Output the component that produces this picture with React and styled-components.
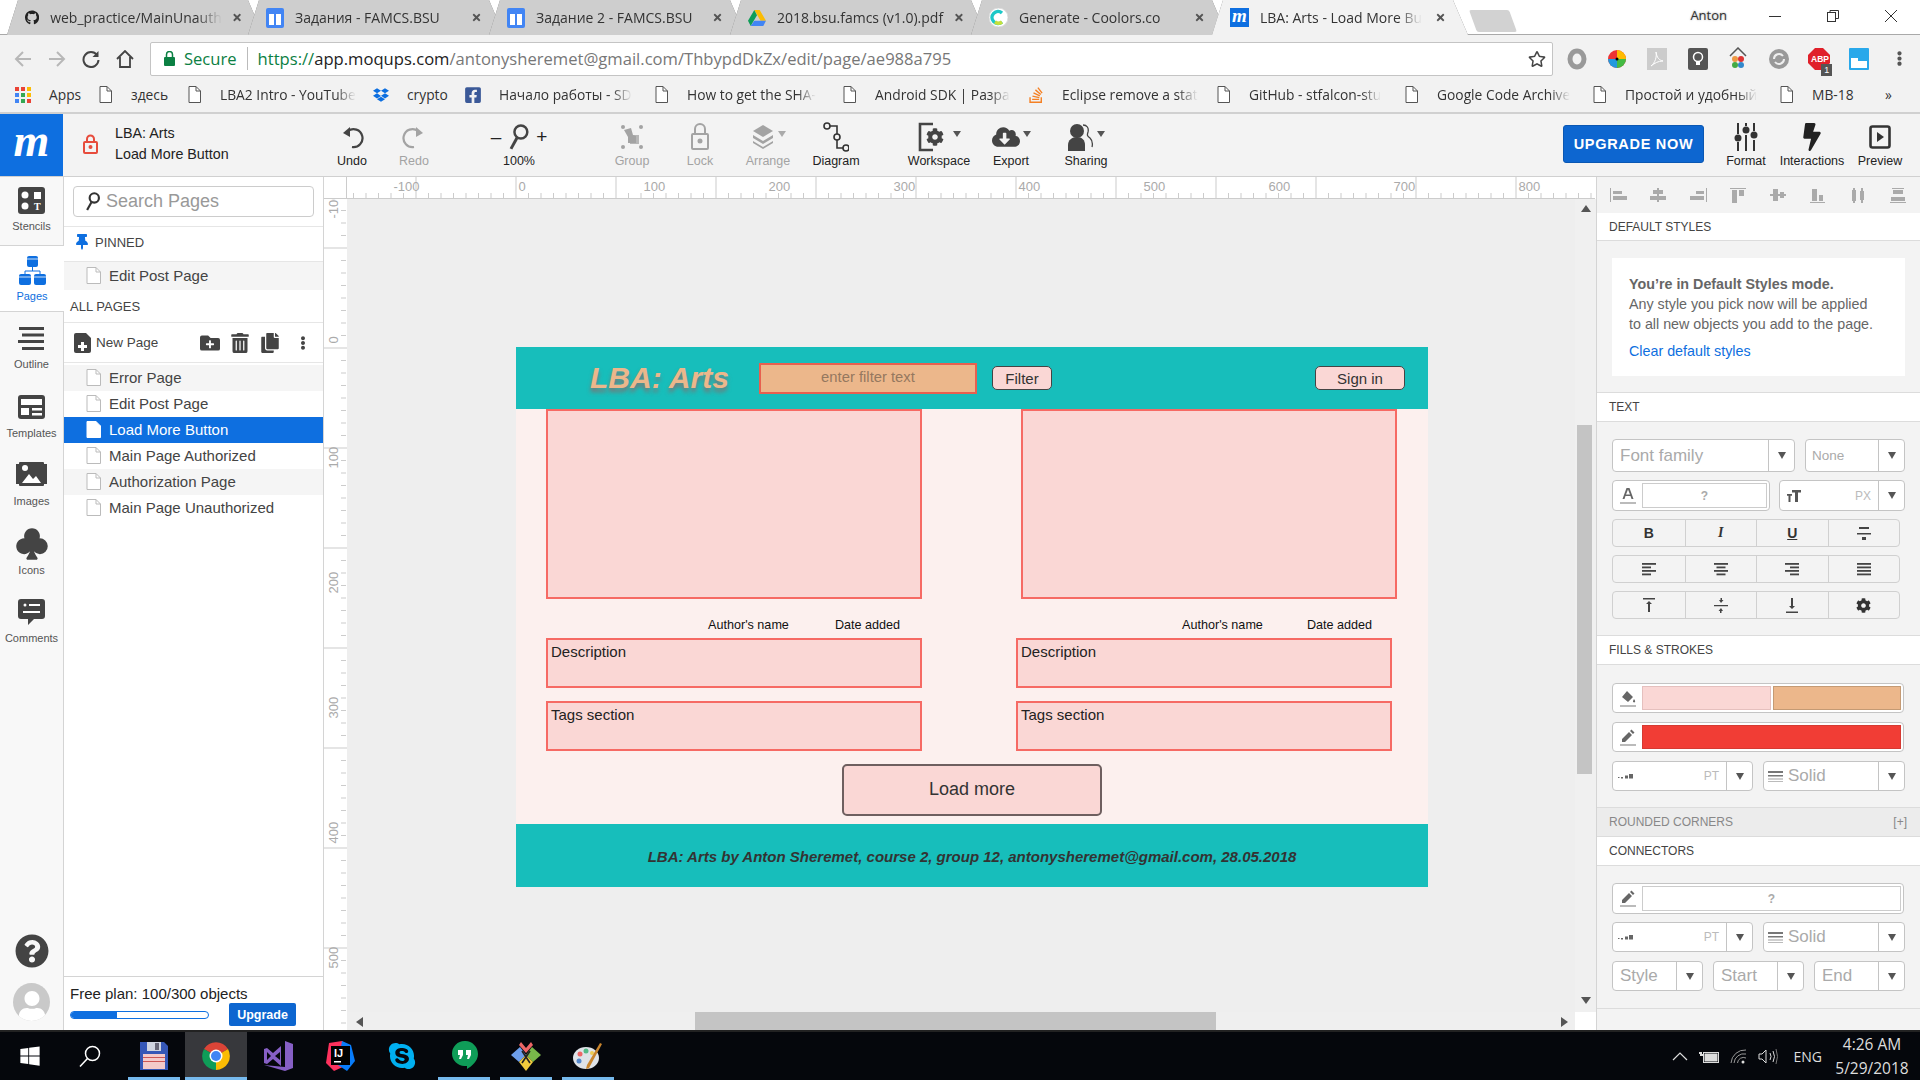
import React from 'react';
import styled, { createGlobalStyle } from 'styled-components';
import {
  FaGithub, FaDropbox, FaFacebookSquare, FaStackOverflow, FaWindows, FaSkype, FaRegStar, FaBolt, FaCog,
  FaCloudDownloadAlt, FaThumbtack, FaTrashAlt, FaQuestionCircle, FaFolderPlus, FaCopy, FaEllipsisV, FaTimes,
  FaUser,
} from 'react-icons/fa';
import { BsSuitClubFill } from 'react-icons/bs';

const Global = createGlobalStyle`
  html, body { margin: 0; padding: 0; width: 1920px; height: 1080px; overflow: hidden; background: #fff; }
  * { box-sizing: border-box; }
  body { font-family: "Liberation Sans", Arial, sans-serif; color: #333; }
`;

const Screen = styled.div`
  width: 1920px;
  height: 1080px;
  display: flex;
  flex-direction: column;
  overflow: hidden;
`;

/* ---------- browser chrome ---------- */
const TabStrip = styled.div`
  height: 35px;
  display: flex;
  padding-left: 7px;
  background: #fff;
  border-bottom: 1px solid #a9a9a9;
  font-family: "Open Sans", sans-serif;
`;

const Tab = styled.div`
  position: relative;
  z-index: ${(p) => (p.$active ? 2 : 1)};
  width: 256px;
  height: 35px;
  margin-right: -15px;
  filter: drop-shadow(0 0 0.6px #777);
`;

const TabShape = styled.div`
  height: 100%;
  padding: 0 22px 0 18px;
  display: flex;
  align-items: center;
  gap: 11px;
  font-size: 14px;
  color: #333;
  background: ${(p) => (p.$active ? '#f2f2f2' : '#cecece')};
  clip-path: polygon(0 100%, 11px 0, 241px 0, 100% 100%);
`;

const TabTitle = styled.span`
  margin-right: auto;
  white-space: nowrap;
  mask-image: ${(p) => (p.$fade ? 'linear-gradient(to right, #000 85%, transparent 100%)' : 'none')};
`;

const NewTab = styled.div`
  width: 40px;
  height: 22px;
  margin: 10px 0 0 20px;
  background: #d2d2d2;
  transform: skewX(20deg);
  border-radius: 2px;
`;

const WindowControls = styled.div`
  margin-left: auto;
  display: flex;
  align-items: center;
  height: 32px;
  color: #333;
  font-size: 13px;
`;

const Profile = styled.span`
  margin-right: 19px;
  padding-bottom: 2px;
  text-shadow: 0 0 2px #999;
`;

const WinButton = styled.span`
  width: 58px;
  display: flex;
  justify-content: center;
`;

const AddressRow = styled.div`
  height: 49px;
  display: flex;
  align-items: center;
  padding: 0 0 2px 6px;
  background: #f2f2f2;
`;

const NavIcon = styled.span`
  width: 34px;
  display: flex;
  justify-content: center;
  opacity: ${(p) => (p.$off ? 0.3 : 1)};
`;

const AddressBar = styled.div`
  width: 1404px;
  height: 34px;
  margin-left: 8px;
  padding: 0 6px 0 13px;
  display: flex;
  align-items: center;
  background: #fff;
  border: 1px solid #c4c4c4;
  border-radius: 2px;
  font-family: "Open Sans", sans-serif;
  font-size: 16.6px;
  white-space: nowrap;
`;

const Secure = styled.span`
  color: #0b8043;
  margin-left: 9px;
  padding-right: 10px;
  margin-right: 10px;
  border-right: 1px solid #bbb;
`;

const UrlGrey = styled.span`
  color: #777;
`;

const UrlStrong = styled.span`
  color: #222;
`;

const UrlScheme = styled.span`
  color: #0b8043;
`;

const Extensions = styled.div`
  display: flex;
  align-items: center;
  margin-left: 3px;
`;

const Ext = styled.span`
  position: relative;
  width: 40.4px;
  height: 24px;
  display: flex;
  justify-content: center;
  align-items: center;
`;

const Badge = styled.span`
  position: absolute;
  right: 7px;
  bottom: -5px;
  padding: 0 3px;
  background: #555;
  color: #fff;
  font-size: 9px;
  line-height: 12px;
`;

const Bookmarks = styled.div`
  height: 30px;
  padding: 0 0 7px 15px;
  display: flex;
  align-items: center;
  background: #f2f2f2;
  border-bottom: 2px solid #d0d0d0;
  font-family: "Open Sans", sans-serif;
  font-size: 13.8px;
  color: #333;
`;

const Bookmark = styled.div`
  width: ${(p) => p.$w}px;
  flex: none;
  display: flex;
  align-items: center;
  gap: 18px;
  white-space: nowrap;
  overflow: hidden;
`;

const BookmarkIcon = styled.span`
  width: 16px;
  flex: none;
  display: flex;
  justify-content: center;
`;

const BookmarkText = styled.span`
  mask-image: ${(p) => (p.$fade ? 'linear-gradient(to right, #000 85%, transparent 100%)' : 'none')};
`;

/* ---------- moqups toolbar ---------- */
const AppBar = styled.div`
  height: 63px;
  padding-right: 5px;
  display: flex;
  align-items: stretch;
  background: #f3f3f3;
  border-bottom: 1px solid #d0d0d0;
`;

const Logo = styled.div`
  width: 63px;
  background: #0e6fe0;
  color: #fff;
  display: flex;
  align-items: center;
  justify-content: center;
  font: italic bold 46px "Liberation Serif", serif;
  line-height: 1;
  padding-bottom: 8px;
`;

const ProjectInfo = styled.div`
  width: 259px;
  display: flex;
  align-items: center;
  padding: 0 0 2px 20px;
  gap: 17px;
  font-size: 14.3px;
  line-height: 21px;
  color: #222;
`;

const Tool = styled.div`
  width: ${(p) => p.$w}px;
  margin-left: ${(p) => p.$ml || 0}px;
  padding-top: 8px;
  flex: none;
  display: flex;
  flex-direction: column;
  align-items: center;
  font-size: 12.5px;
  color: ${(p) => (p.$off ? '#a3a3a3' : '#222')};
`;

const ToolIcon = styled.div`
  height: 29px;
  margin-bottom: 3px;
  display: flex;
  align-items: center;
  gap: 3px;
  color: ${(p) => (p.$off ? '#a3a3a3' : '#444')};
`;

const DropMark = styled.span`
  width: 0;
  height: 0;
  border-left: 4px solid transparent;
  border-right: 4px solid transparent;
  border-top: 6px solid ${(p) => (p.$off ? '#aaa' : '#555')};
  margin-bottom: 6px;
`;

const ZoomSign = styled.span`
  font-size: 19px;
  color: #222;
  padding: 0 4px;
`;

const UpgradeNow = styled.div`
  width: 141px;
  height: 38px;
  margin: 11px 9px 0 auto;
  display: flex;
  align-items: center;
  justify-content: center;
  background: #0d66d0;
  border: 1px solid #0a57b3;
  border-radius: 3px;
  color: #fff;
  font-size: 14.5px;
  font-weight: bold;
  letter-spacing: 0.7px;
`;

/* ---------- main area ---------- */
const Main = styled.div`
  flex: 1;
  min-height: 0;
  display: flex;
`;

const Rail = styled.div`
  width: 64px;
  display: flex;
  flex-direction: column;
  background: #f8f8f8;
  border-right: 1px solid #d4d4d4;
`;

const RailItem = styled.div`
  height: ${(p) => p.$h || 68.5}px;
  margin-right: ${(p) => (p.$active ? '-1px' : 0)};
  display: flex;
  flex-direction: column;
  align-items: center;
  padding-top: ${(p) => p.$pt || 10}px;
  gap: 4px;
  font-size: 11px;
  color: ${(p) => (p.$active ? '#0e6fe0' : '#555')};
  background: ${(p) => (p.$active ? '#fff' : 'transparent')};
  border-top: ${(p) => (p.$active ? '1px solid #d4d4d4' : 'none')};
  border-bottom: ${(p) => (p.$active ? '1px solid #d4d4d4' : 'none')};
`;

const RailIcon = styled.div`
  height: 32px;
  display: flex;
  align-items: center;
  color: ${(p) => (p.$active ? '#0e6fe0' : '#444')};
`;

const RailBottom = styled.div`
  margin-top: auto;
  height: 96px;
  display: flex;
  flex-direction: column;
  align-items: center;
  gap: 15px;
  color: #444;
`;

const AvatarCircle = styled.div`
  width: 37px;
  height: 38px;
  border-radius: 50%;
  overflow: hidden;
  background: #c9c9c9;
  color: #fff;
  display: flex;
  justify-content: center;
  align-items: flex-end;
`;

const Panel = styled.div`
  width: 260px;
  display: flex;
  flex-direction: column;
  background: #fff;
  border-right: 1px solid #d4d4d4;
`;

const SearchWrap = styled.div`
  height: 50px;
  padding: 9px 9px 0 9px;
  border-bottom: 1px solid #e6e6e6;
`;

const SearchBox = styled.div`
  height: 31px;
  display: flex;
  align-items: center;
  gap: 6px;
  padding-left: 11px;
  border: 1px solid #ccc;
  border-radius: 4px;
  font-size: 18px;
  color: #999;
`;

const PanelHead = styled.div`
  height: ${(p) => p.$h}px;
  display: flex;
  align-items: center;
  gap: 5px;
  padding: 0 0 ${(p) => p.$pb || 0}px ${(p) => p.$pl || 6}px;
  font-size: 13px;
  color: #444;
  border-bottom: 1px solid #e6e6e6;
`;

const NewPageRow = styled.div`
  height: 40px;
  display: flex;
  align-items: center;
  padding: 0 13px 0 10px;
  font-size: 13.5px;
  color: #444;
  border-bottom: 1px solid #e6e6e6;
`;

const NewPageLabel = styled.span`
  margin: 0 auto 0 5px;
`;

const RowActions = styled.div`
  display: flex;
  align-items: center;
  gap: 10px;
  color: #444;
`;

const ActionDots = styled.span`
  display: flex;
  margin-left: 6px;
`;

const PageRow = styled.div`
  height: ${(p) => p.$h || 26}px;
  display: flex;
  align-items: center;
  gap: 8px;
  padding: 0 0 2px 22px;
  font-size: 15px;
  color: ${(p) => (p.$active ? '#fff' : '#444')};
  background: ${(p) => (p.$active ? '#0e6fe0' : p.$shade ? '#f5f5f5' : '#fff')};
`;

const ListGap = styled.div`
  height: 2px;
`;

const PlanBox = styled.div`
  margin-top: auto;
  height: 54px;
  padding: 8px 6px 0 6px;
  border-top: 1px solid #d4d4d4;
  font-size: 15px;
  color: #222;
`;

const PlanRow = styled.div`
  display: flex;
  align-items: center;
  justify-content: space-between;
  padding-right: 21px;
  margin-top: 1px;
`;

const Progress = styled.div`
  width: 139px;
  height: 8px;
  border: 1px solid #0e6fe0;
  border-radius: 4px;
  overflow: hidden;
`;

const ProgressFill = styled.div`
  height: 100%;
  background: #0e6fe0;
`;

const SmallUpgrade = styled.div`
  width: 67px;
  height: 23px;
  display: flex;
  align-items: center;
  justify-content: center;
  background: #0d66d0;
  border-radius: 2px;
  color: #fff;
  font-size: 12.5px;
  font-weight: bold;
`;

const Workspace = styled.div`
  flex: 1;
  min-width: 0;
  display: grid;
  grid-template-columns: 23px 1fr;
  grid-template-rows: 22px 1fr;
  background: #fff;
`;

const RulerCorner = styled.div`
  border-bottom: 1px solid #ccc;
  border-right: 1px solid #ccc;
`;

const RulerSvg = styled.svg`
  display: block;
  font-family: "Liberation Sans", sans-serif;
  font-size: 13px;
  fill: #aaa;
`;

const Canvas = styled.div`
  position: relative;
  background: #eee;
  padding: 148px 0 0 169px;
  overflow: hidden;
`;

const VScroll = styled.div`
  position: absolute;
  top: 0;
  right: 0;
  bottom: 18px;
  width: 21px;
  padding-top: 226px;
  background: #f0f0f0;
`;

const VThumb = styled.div`
  width: 15px;
  height: 349px;
  margin-left: 2px;
  background: #c4c4c4;
`;

const HScroll = styled.div`
  position: absolute;
  left: 0;
  right: 0;
  bottom: 0;
  height: 18px;
  padding-left: 348px;
  background: #efefef;
`;

const HThumb = styled.div`
  width: 521px;
  height: 100%;
  background: #c4c4c4;
`;

const Corner = styled.div`
  position: absolute;
  right: 0;
  bottom: 0;
  width: 21px;
  height: 18px;
  background: #fff;
`;

const Arrow = styled.span`
  position: absolute;
  width: 0;
  height: 0;
  border: 5px solid transparent;
  ${(p) => p.$css}
`;

/* ---------- the mocked page on canvas ---------- */
const Mock = styled.div`
  width: 912px;
  height: 540px;
  display: flex;
  flex-direction: column;
  background: #fcf0ee;
`;

const MockBar = styled.div`
  height: ${(p) => p.$h}px;
  flex: none;
  display: flex;
  align-items: center;
  background: #17bebb;
`;

const MockTitle = styled.div`
  width: 243px;
  padding-left: 74px;
  font-size: 30px;
  font-weight: bold;
  font-style: italic;
  color: #ecb78b;
  text-shadow: 0 4px 4px #777;
  white-space: nowrap;
`;

const FilterInput = styled.div`
  width: 218px;
  height: 31px;
  display: flex;
  align-items: center;
  justify-content: center;
  background: #ecb78b;
  border: 2px solid #e8604f;
  font-size: 14.8px;
  color: #95785f;
  padding-bottom: 3px;
`;

const MockButton = styled.div`
  width: ${(p) => p.$w}px;
  height: ${(p) => p.$h}px;
  margin-left: ${(p) => p.$ml || '0'};
  margin-right: ${(p) => p.$mr || 0}px;
  padding-bottom: ${(p) => (p.$big ? 2 : 0)}px;
  display: flex;
  align-items: center;
  justify-content: center;
  flex: none;
  background: #fad7d5;
  border: ${(p) => (p.$big ? '2px solid #6e5f5f' : '1.5px solid #444')};
  border-radius: 5px;
  font-size: ${(p) => (p.$big ? 18 : 15)}px;
  color: #333;
`;

const MockBody = styled.div`
  flex: 1;
  min-height: 0;
  padding-left: 30px;
  display: flex;
  flex-direction: column;
`;

const Cards = styled.div`
  display: flex;
  gap: 94px;
`;

const Card = styled.div`
  width: ${(p) => p.$w}px;
`;

const Thumb = styled.div`
  width: 376px;
  height: 190px;
  margin-left: ${(p) => p.$ml || 0}px;
  background: #fad7d5;
  border: 2px solid #f66a64;
`;

const Meta = styled.div`
  height: 39px;
  display: flex;
  justify-content: flex-end;
  align-items: center;
  gap: ${(p) => p.$gap}px;
  padding: 13px ${(p) => p.$pr}px 0 0;
  font-size: 12.6px;
  color: #111;
`;

const TextBox = styled.div`
  width: 376px;
  height: 50px;
  margin-bottom: 13px;
  padding: 3px 3px;
  background: #fad7d5;
  border: 2px solid #f66a64;
  font-size: 15px;
  color: #222;
`;

const FooterText = styled.div`
  width: 100%;
  text-align: center;
  padding-top: 1px;
  font-size: 15px;
  font-weight: bold;
  font-style: italic;
  color: #333;
`;

/* ---------- right panel ---------- */
const Props = styled.div`
  width: 324px;
  flex: none;
  display: flex;
  flex-direction: column;
  background: #f3f3f3;
  border-left: 1px solid #d4d4d4;
`;

const AlignBar = styled.div`
  height: 36px;
  display: flex;
  align-items: center;
  justify-content: space-between;
  padding: 0 13px 0 13px;
`;

const SectionHead = styled.div`
  height: ${(p) => p.$h || 29}px;
  display: flex;
  align-items: center;
  justify-content: space-between;
  padding: 0 13px 0 12px;
  font-size: 12px;
  color: ${(p) => (p.$muted ? '#888' : '#444')};
  background: ${(p) => (p.$muted ? '#ececec' : '#fff')};
  border-bottom: 1px solid #dcdcdc;
`;

const Section = styled.div`
  height: ${(p) => p.$h}px;
  padding: ${(p) => p.$pt || 17}px 15px 0 15px;
  display: flex;
  flex-direction: column;
  gap: ${(p) => p.$gap || 8}px;
  border-bottom: ${(p) => (p.$line ? '1px solid #dcdcdc' : 'none')};
`;

const InfoCard = styled.div`
  height: 118px;
  padding: 16px 17px;
  background: #fff;
  font-size: 14.3px;
  line-height: 20px;
  color: #666;
`;

const InfoBold = styled.div`
  font-weight: bold;
`;

const InfoLink = styled.div`
  margin-top: 7px;
  color: #0e6fe0;
`;

const Row = styled.div`
  display: flex;
  justify-content: space-between;
  margin-top: ${(p) => p.$mt || 0}px;
`;

const Field = styled.div`
  width: ${(p) => p.$w}px;
  height: ${(p) => p.$h || 31}px;
  margin-top: ${(p) => p.$mt || 0}px;
  display: flex;
  align-items: stretch;
  background: #fff;
  border: 1px solid #c4c4c4;
  border-radius: 4px;
  overflow: hidden;
`;

const FieldText = styled.div`
  flex: 1;
  display: flex;
  align-items: center;
  gap: 5px;
  padding-left: ${(p) => p.$pl || 7}px;
  font-size: ${(p) => p.$size || 17}px;
  color: #aaa;
  white-space: nowrap;
`;

const FieldUnit = styled.span`
  margin-left: auto;
  padding-right: 7px;
  font-size: 12px;
  color: #bbb;
`;

const Caret = styled.div`
  width: 26px;
  flex: none;
  display: flex;
  align-items: center;
  justify-content: center;
  border-left: 1px solid #c4c4c4;
  &::after {
    content: '';
    border-left: 4px solid transparent;
    border-right: 4px solid transparent;
    border-top: 7px solid #555;
  }
`;

const FieldIcon = styled.div`
  width: 29px;
  flex: none;
  display: flex;
  align-items: center;
  justify-content: center;
`;

const Swatch = styled.div`
  flex: 1;
  margin: 2px 2px 2px 0;
  display: flex;
  align-items: center;
  justify-content: center;
  font-size: 12px;
  font-weight: bold;
  color: #aaa;
  background: ${(p) => p.$bg || '#fff'};
  border: 1px solid ${(p) => p.$line || '#ccc'};
`;

const Seg = styled.div`
  width: 288px;
  height: 28px;
  display: grid;
  grid-template-columns: repeat(4, 1fr);
  border: 1px solid #d0d0d0;
  border-radius: 4px;
`;

const SegCell = styled.div`
  display: flex;
  align-items: center;
  justify-content: center;
  font: ${(p) => p.$font || 'bold 14px "Liberation Sans", sans-serif'};
  text-decoration: ${(p) => (p.$under ? 'underline' : 'none')};
  color: #333;
  & + & {
    border-left: 1px solid #d0d0d0;
  }
`;

/* ---------- taskbar ---------- */
const Taskbar = styled.div`
  height: 50px;
  flex: none;
  display: flex;
  align-items: stretch;
  background: #05070c;
  border-top: 2px solid #222;
  color: #ddd;
  font-family: "Open Sans", sans-serif;
`;

const TaskItem = styled.div`
  position: relative;
  width: ${(p) => p.$w || 62}px;
  padding-right: ${(p) => p.$pr || 0}px;
  flex: none;
  display: flex;
  align-items: center;
  justify-content: center;
  background: ${(p) => (p.$active ? '#37383c' : 'transparent')};
  &::after {
    content: '';
    display: ${(p) => (p.$open ? 'block' : 'none')};
    position: absolute;
    left: ${(p) => (p.$active ? 0 : 5)}px;
    right: ${(p) => (p.$active ? 0 : 5)}px;
    bottom: 0;
    height: 3px;
    background: #76b9ed;
  }
`;

const Tray = styled.div`
  margin-left: auto;
  display: flex;
  align-items: center;
  gap: 11px;
  padding-right: 6px;
  font-size: 14px;
`;

const Lang = styled.span`
  margin-left: 5px;
`;

const Clock = styled.div`
  width: 76px;
  margin: 0 4px 0 1px;
  text-align: center;
  font-size: 15.5px;
  line-height: 24px;
`;

/* ---------- icons ---------- */
const Doc = ({ fill = '#fff', line = '#bbb' }) => (
  <svg width="15" height="17" viewBox="0 0 15 17">
    <path d="M1 .5h9l4.500 4.500v11.500h-13.500z" fill={fill} stroke={line} />
    <path d="M10 .5v4.500h4.500" fill="none" stroke={line} />
  </svg>
);

const BookDoc = () => (
  <svg width="13" height="17" viewBox="0 0 13 17">
    <path d="M1 .5h7l4.500 4.500v11.500h-11.500z" fill="#fff" stroke="#555" />
    <path d="M8 .5v4.500h4.500" fill="none" stroke="#555" />
  </svg>
);

const Sheets = () => (
  <svg width="18" height="20" viewBox="0 0 18 20">
    <rect width="18" height="20" rx="2" fill="#4285f4" />
    <path d="M3 3h12v14h-12z" fill="#fff" />
    <path d="M3 3h12v3h-12zM8 6h2v11h-2z" fill="#4285f4" />
  </svg>
);

const Drive = () => (
  <svg width="20" height="18" viewBox="0 0 20 18">
    <path d="M7 0h6l7 12h-6z" fill="#fbbc04" />
    <path d="M7 0l-7 12 3 6 7-12z" fill="#0f9d58" />
    <path d="M3 18h14l3-6h-13z" fill="#4285f4" />
  </svg>
);

const Coolors = () => (
  <svg width="19" height="19" viewBox="0 0 19 19">
    <circle cx="9.500" cy="9.500" r="9.500" fill="#fff" stroke="#ddd" />
    <path d="M13 5a6 6 0 1 0 0 9" fill="none" stroke="#1cc8c8" strokeWidth="3.500" />
    <path d="M6 14a6 6 0 0 0 7 0" fill="none" stroke="#c6e03a" strokeWidth="3.500" />
  </svg>
);

const MoqupsFav = styled.span`
  width: 19px;
  height: 19px;
  flex: none;
  display: flex;
  align-items: center;
  justify-content: center;
  background: #0e6fe0;
  color: #fff;
  font: italic bold 19px "Liberation Serif", serif;
  padding-bottom: 3px;
`;

const AppsGrid = () => (
  <svg width="16" height="16" viewBox="0 0 16 16">
    {['#ea4335', '#ea4335', '#fbbc04', '#4285f4', '#34a853', '#fbbc04', '#4285f4', '#34a853', '#ea4335'].map((c, i) => (
      <rect key={i} x={(i % 3) * 6} y={Math.floor(i / 3) * 6} width="4" height="4" fill={c} />
    ))}
  </svg>
);

const Undo = ({ flip }) => (
  <svg width="24" height="26" viewBox="0 0 24 26" style={flip ? { transform: 'scaleX(-1)' } : undefined}>
    <path d="M8 7a9 9 0 1 1 4 16" fill="none" stroke="currentColor" strokeWidth="2.200" />
    <path d="M3 9l7-6v10z" fill="currentColor" />
  </svg>
);

const Magnifier = ({ size = 26 }) => (
  <svg width={size * 0.8} height={size} viewBox="0 0 21 26" fill="none" stroke="currentColor" strokeWidth="2.500">
    <circle cx="13" cy="8" r="6.500" />
    <path d="M9 14l-6 11" strokeWidth="3" />
  </svg>
);

const GroupIcon = () => (
  <svg width="24" height="26" viewBox="0 0 24 26" fill="currentColor">
    <circle cx="3" cy="3" r="2" /><circle cx="21" cy="3" r="2" /><circle cx="3" cy="23" r="2" /><circle cx="21" cy="23" r="2" />
    <path d="M4 6l7-2 2 7 3 1v7h-8v-6z" />
    <rect x="10" y="11" width="9" height="9" opacity=".75" />
  </svg>
);

const LockIcon = () => (
  <svg width="18" height="28" viewBox="0 0 18 28" fill="none" stroke="currentColor" strokeWidth="2">
    <rect x="1" y="11" width="16" height="15" rx="1" />
    <path d="M4 11v-5a5 5 0 0 1 10 0v5" />
    <circle cx="9" cy="18" r="1.500" fill="currentColor" />
  </svg>
);

const Layers = () => (
  <svg width="24" height="26" viewBox="0 0 24 26" fill="currentColor">
    <path d="M12 1l10 6-10 6-10-6z" />
    <path d="M2 11l10 6 10-6v3l-10 6-10-6z" />
    <path d="M2 17l10 6 10-6v2l-10 6-10-6z" />
  </svg>
);

const DiagramIcon = () => (
  <svg width="26" height="30" viewBox="0 0 26 30" fill="none" stroke="#333" strokeWidth="1.600">
    <circle cx="4" cy="4" r="3" />
    <circle cx="14" cy="15" r="3" />
    <circle cx="23" cy="26" r="3" />
    <path d="M7 4h7v8M14 18v8h6" />
  </svg>
);

const WorkspaceIcon = () => (
  <svg width="32" height="30" viewBox="0 0 32 30">
    <path d="M15 2h-13v26h13" fill="none" stroke="#444" strokeWidth="2.600" />
    <foreignObject x="8" y="6" width="18" height="18">
      <FaCog size={18} color="#444" />
    </foreignObject>
  </svg>
);

const SharingIcon = () => (
  <svg width="26" height="28" viewBox="0 0 26 28" fill="#444">
    <circle cx="9" cy="8" r="7" />
    <path d="M0 28v-6c0-5 4-8 9-8s8 3 8 8v6z" />
    <path d="M15 2c4 0 6 3 5 7-1 3-1 4 2 6 2 2 3 5 2 9" fill="none" stroke="#444" strokeWidth="1.300" />
  </svg>
);

const FormatIcon = () => (
  <svg width="24" height="30" viewBox="0 0 24 30" fill="#333">
    <rect x="3" y="1" width="2" height="11" /><rect x="3" y="20" width="2" height="9" /><circle cx="4" cy="16" r="3.500" />
    <rect x="11" y="1" width="2" height="3" /><rect x="11" y="13" width="2" height="16" /><circle cx="12" cy="8" r="3.500" />
    <rect x="19" y="1" width="2" height="8" /><rect x="19" y="18" width="2" height="11" /><circle cx="20" cy="13" r="3.500" />
  </svg>
);

const PreviewIcon = () => (
  <svg width="22" height="24" viewBox="0 0 22 24">
    <rect x="1.500" y="1.500" width="19" height="21" rx="2" fill="none" stroke="#333" strokeWidth="2.600" />
    <path d="M8 7l7 5-7 5z" fill="#333" />
  </svg>
);

const StencilsIcon = () => (
  <svg width="27" height="27" viewBox="0 0 27 27">
    <rect width="27" height="27" rx="3" fill="#444" />
    <circle cx="7" cy="8" r="3.500" fill="#fff" /><rect x="16" y="5" width="7" height="7" fill="#fff" />
    <circle cx="7" cy="19" r="3.500" fill="#fff" />
    <text x="16" y="23" fontSize="10" fontWeight="bold" fontFamily="Liberation Serif" fill="#fff">T</text>
  </svg>
);

const PagesIcon = () => (
  <svg width="27" height="29" viewBox="0 0 27 29" fill="#0e6fe0">
    <rect x="8" y="0" width="11" height="11" rx="2" />
    <path d="M13.500 11v4M6 19v-4h15v4" fill="none" stroke="#0e6fe0" />
    <rect x="0" y="18" width="12" height="11" rx="2" /><rect x="15" y="18" width="12" height="11" rx="2" />
    <path d="M8 3h11M0 21h12M15 21h12" stroke="#fff" strokeWidth=".8" />
  </svg>
);

const OutlineIcon = () => (
  <svg width="27" height="23" viewBox="0 0 27 23" fill="#444">
    <rect x="1" y="0" width="25" height="3" /><rect x="4" y="6.500" width="22" height="3" />
    <rect x="0" y="13" width="26" height="3" /><rect x="4" y="20" width="22" height="3" />
  </svg>
);

const TemplatesIcon = () => (
  <svg width="27" height="24" viewBox="0 0 27 24">
    <rect width="27" height="24" rx="3" fill="#444" />
    <rect x="3" y="4" width="21" height="6" fill="#fff" /><rect x="3" y="13" width="8" height="7" fill="#fff" />
    <rect x="14" y="13" width="10" height="2.500" fill="#fff" /><rect x="14" y="18" width="10" height="2.500" fill="#fff" />
  </svg>
);

const ImagesIcon = () => (
  <svg width="31" height="26" viewBox="0 0 31 26">
    <rect x="0" y="2" width="3" height="20" fill="#444" /><rect x="28" y="2" width="3" height="20" fill="#444" />
    <rect x="3" y="0" width="25" height="24" rx="1" fill="#444" />
    <circle cx="9" cy="6" r="3" fill="#fff" />
    <path d="M6 21l7-9 4 5 3-3 5 7z" fill="#fff" />
  </svg>
);

const CommentsIcon = () => (
  <svg width="27" height="26" viewBox="0 0 27 26">
    <path d="M3 0h21a3 3 0 0 1 3 3v14a3 3 0 0 1-3 3h-8l-6 6v-6h-7a3 3 0 0 1-3-3v-14a3 3 0 0 1 3-3z" fill="#444" />
    <circle cx="7" cy="6" r="1.500" fill="#fff" /><rect x="11" y="5" width="11" height="2" fill="#fff" />
    <rect x="5" y="12" width="17" height="2" fill="#fff" />
  </svg>
);

const NewPageIcon = () => (
  <svg width="17" height="20" viewBox="0 0 17 20">
    <path d="M2 0h10l5 5v13a2 2 0 0 1-2 2h-13a2 2 0 0 1-2-2v-16a2 2 0 0 1 2-2z" fill="#444" />
    <path d="M7 9h3v3h3v3h-3v3h-3v-3h-3v-3h3z" fill="#fff" />
  </svg>
);

const alignShapes = [
  'M0 0h1v14h-1zM3 3h9v3h-9zM3 8h14v4h-14z',
  'M7 0h2v14h-2zM3 2h10v4h-10zM0 8h16v4h-16z',
  'M16 0h1v14h-1zM6 3h8v3h-8zM0 8h14v4h-14z',
  'M0 0h16v1h-16zM2 2h5v13h-5zM9 2h5v6h-5z',
  'M0 6h16v2h-16zM3 1h5v12h-5zM10 4h4v6h-4z',
  'M0 14h15v1h-15zM2 1h5v12h-5zM9 7h4v6h-4z',
  'M2 2h4v11h-4zM3 0h2v15h-2zM10 3h4v9h-4zM11 0h2v15h-2z',
  'M2 0h12v1h-12zM3 2h10v4h-10zM1 9h14v4h-14zM0 14h16v1h-16z',
];

const AlignIcon = ({ d }) => (
  <svg width="17" height="15" viewBox="0 0 17 15" fill="#aaa">
    <path d={d} />
  </svg>
);

const TextAlign = ({ mode }) => (
  <svg width="14" height="13" viewBox="0 0 14 13" fill="#444">
    {[0, 1, 2, 3].map((i) => {
      const w = mode === 'full' ? 14 : i % 2 ? 9 : 14;
      const x = mode === 'left' || mode === 'full' ? 0 : mode === 'center' ? (14 - w) / 2 : 14 - w;
      return <rect key={i} x={x} y={i * 3.500} width={w} height="1.800" />;
    })}
  </svg>
);

const VAlign = ({ d }) => (
  <svg width="14" height="15" viewBox="0 0 14 15" fill="#444"><path d={d} /></svg>
);

const PenIcon = () => (
  <svg width="16" height="17" viewBox="0 0 16 17" fill="#666">
    <path d="M2 10l7-7 3 3-7 7h-3zM10 2l1.500-1.500 3 3-1.500 1.500z" />
    <rect y="15" width="16" height="2" fill="#bbb" />
  </svg>
);

const FillIcon = () => (
  <svg width="16" height="17" viewBox="0 0 16 17" fill="#666">
    <path d="M7 1l6 6-5 5-6-5zM14 9c1 1.500 1.500 2 1 3-.5.700-2 .5-2-.5 0-.7.500-1.500 1-2.500z" />
    <rect y="15" width="16" height="2" fill="#bbb" />
  </svg>
);

const LineWeight = () => (
  <svg width="15" height="6" viewBox="0 0 15 6" fill="#666">
    <rect x="0" y="4" width="1.500" height="1" /><rect x="3" y="4" width="2" height="1.500" />
    <rect x="7" y="2.500" width="3" height="3" /><rect x="11" y="1" width="4" height="4.500" />
  </svg>
);

const StrokeStyle = () => (
  <svg width="15" height="11" viewBox="0 0 15 11" fill="#777">
    <rect width="15" height="2" /><rect y="4" width="15" height="1.500" />
    <rect y="7.500" width="15" height="1" opacity=".7" /><rect y="10" width="15" height="1" opacity=".5" />
  </svg>
);

const TextSizeIcon = () => (
  <svg width="14" height="12" viewBox="0 0 14 12" fill="#555">
    <path d="M5 0h9v2.500h-3v9.500h-3v-9.500h-3zM0 4h5v1.800h-1.500v6.200h-2v-6.200h-1.500z" />
  </svg>
);

const ChromeIcon = () => (
  <svg width="28" height="28" viewBox="0 0 28 28">
    <path d="M14 14L2 7A14 14 0 0 1 26 7z" fill="#db4437" />
    <path d="M14 14L26 7A14 14 0 0 1 14 28z" fill="#fbbc04" />
    <path d="M14 14L14 28A14 14 0 0 1 2 7z" fill="#0f9d58" />
    <circle cx="14" cy="14" r="6.500" fill="#fff" /><circle cx="14" cy="14" r="5" fill="#4285f4" />
  </svg>
);

const FloppyIcon = () => (
  <svg width="28" height="28" viewBox="0 0 28 28">
    <path d="M0 0h24l4 4v24h-28z" fill="#3557b7" />
    <rect x="7" y="0" width="14" height="9" fill="#cfd4e0" /><rect x="15" y="1" width="4" height="7" fill="#667" />
    <rect x="3" y="12" width="22" height="15" fill="#f3c9c9" />
    <rect x="3" y="15" width="22" height="1" fill="#c55" /><rect x="3" y="19" width="22" height="1" fill="#c55" />
  </svg>
);

const VsIcon = () => (
  <svg width="29" height="30" viewBox="0 0 29 30" fill="#865fc5">
    <path d="M21 0l8 3v24l-8 3-21-6 21 2z" />
    <path d="M0 8l3-1 6 5 8-7v20l-8-7-6 5-3-1zM3 11v8l4-4zM11 15l5 4v-8z" />
  </svg>
);

const IdeaIcon = () => (
  <svg width="29" height="30" viewBox="0 0 29 30">
    <path d="M3 2l13-2 7 5-4 20-11 5-8-8z" fill="#fe315d" />
    <path d="M16 0l9 4 4 16-8 10-9-6z" fill="#087cfa" />
    <rect x="5" y="5" width="19" height="19" fill="#000" />
    <text x="8" y="16" fontSize="11" fontWeight="bold" fontFamily="Liberation Sans" fill="#fff">IJ</text>
    <rect x="8" y="20" width="7" height="1.500" fill="#fff" />
  </svg>
);

const HangoutsIcon = () => (
  <svg width="27" height="30" viewBox="0 0 27 30">
    <path d="M13.500 0a13 13 0 0 1 13.500 13c0 7-6 12-11 15v-3h-2.500a12.500 12.500 0 0 1 0-25z" fill="#0f9d58" />
    <path d="M7 9h5v5l-2 4h-2l1-4h-2zM15 9h5v5l-2 4h-2l1-4h-2z" fill="#fff" />
  </svg>
);

const KrakenIcon = () => (
  <svg width="30" height="30" viewBox="0 0 30 30">
    <path d="M9 6l6 8-7 7-8-7z" fill="#6d9eeb" /><path d="M21 6l9 8-8 7-7-7z" fill="#79b74a" />
    <path d="M8 21l7-7 7 7-7 9z" fill="#f2cb3d" /><path d="M10 1l5 6 5-6 2 3-7 8-7-8z" fill="#e66" />
    <path d="M11 10l8 12M19 10l-8 12" stroke="#222" strokeWidth="1.600" />
  </svg>
);

const PaletteIcon = () => (
  <svg width="30" height="30" viewBox="0 0 30 30">
    <ellipse cx="13" cy="17" rx="13" ry="11" fill="#dfe3e8" />
    <circle cx="7" cy="13" r="2.500" fill="#e66" /><circle cx="13" cy="10" r="2.500" fill="#5b8" />
    <circle cx="6" cy="20" r="2.500" fill="#58c" /><circle cx="19" cy="12" r="2" fill="#ec5" />
    <path d="M27 2l2 1-13 24-3 1 1-4z" fill="#c9852d" />
  </svg>
);

const Wifi = () => (
  <svg width="17" height="15" viewBox="0 0 17 15" fill="none" stroke="#999">
    <path d="M1 14a14 14 0 0 1 15-13M4 14a10 10 0 0 1 12-9M7.500 14a6 6 0 0 1 8.500-5" />
    <circle cx="13" cy="13" r="1.500" fill="#ddd" stroke="none" />
  </svg>
);

const Speaker = () => (
  <svg width="20" height="17" viewBox="0 0 20 17" fill="none" stroke="#ddd">
    <path d="M1 6h3l4-4v13l-4-4h-3z" /><path d="M12 5q2 3.500 0 7M15 3q3 5.500 0 11" /><path d="M18 1q3 7.500 0 15" stroke="#777" />
  </svg>
);

const Battery = () => (
  <svg width="20" height="14" viewBox="0 0 20 14" fill="#ddd">
    <path d="M0 3h3v2h-3z" /><rect x="1" y="5" width="3" height="2" />
    <rect x="4.500" y="3.500" width="15" height="10" fill="none" stroke="#ddd" /><rect x="5.500" y="4.500" width="13" height="8" />
  </svg>
);

/* ---------- data ---------- */
const tabs = [
  { icon: <FaGithub size={19} color="#222" />, title: 'web_practice/MainUnauth', fade: true },
  { icon: <Sheets />, title: 'Задания - FAMCS.BSU' },
  { icon: <Sheets />, title: 'Задание 2 - FAMCS.BSU' },
  { icon: <Drive />, title: '2018.bsu.famcs (v1.0).pdf' },
  { icon: <Coolors />, title: 'Generate - Coolors.co' },
  { icon: <MoqupsFav>m</MoqupsFav>, title: 'LBA: Arts - Load More Bu', active: true, fade: true },
];

const bookmarks = [
  { w: 82, icon: <AppsGrid />, text: 'Apps' },
  { w: 89, icon: <BookDoc />, text: 'здесь' },
  { w: 187, icon: <BookDoc />, text: 'LBA2 Intro - YouTube', fade: true },
  { w: 92, icon: <FaDropbox size={18} color="#0d6fe0" />, text: 'crypto' },
  { w: 188, icon: <FaFacebookSquare size={18} color="#3b5998" />, text: 'Начало работы - SD', fade: true },
  { w: 188, icon: <BookDoc />, text: 'How to get the SHA-', fade: true },
  { w: 187, icon: <BookDoc />, text: 'Android SDK | Разра', fade: true },
  { w: 187, icon: <FaStackOverflow size={18} color="#f48024" />, text: 'Eclipse remove a stat', fade: true },
  { w: 188, icon: <BookDoc />, text: 'GitHub - stfalcon-stu', fade: true },
  { w: 188, icon: <BookDoc />, text: 'Google Code Archive', fade: true },
  { w: 187, icon: <BookDoc />, text: 'Простой и удобный', fade: true },
  { w: 107, icon: <BookDoc />, text: 'MB-18' },
];

const allPages = ['Error Page', 'Edit Post Page', 'Load More Button', 'Main Page Authorized', 'Authorization Page', 'Main Page Unauthorized'];

const tools = [
  { label: 'Undo', w: 60, icon: <Undo /> },
  { label: 'Redo', w: 64, off: true, icon: <Undo flip /> },
  { label: '100%', w: 80, ml: 33, icon: <><ZoomSign>–</ZoomSign><Magnifier /><ZoomSign>+</ZoomSign></> },
  { label: 'Group', w: 68, ml: 39, off: true, icon: <GroupIcon /> },
  { label: 'Lock', w: 68, off: true, icon: <LockIcon /> },
  { label: 'Arrange', w: 68, off: true, drop: true, icon: <Layers /> },
  { label: 'Diagram', w: 68, icon: <DiagramIcon /> },
  { label: 'Workspace', w: 80, ml: 29, drop: true, icon: <WorkspaceIcon /> },
  { label: 'Export', w: 64, drop: true, icon: <FaCloudDownloadAlt size={28} /> },
  { label: 'Sharing', w: 86, drop: true, icon: <SharingIcon /> },
];

const rightTools = [
  { label: 'Format', w: 66, icon: <FormatIcon /> },
  { label: 'Interactions', w: 66, icon: <FaBolt size={28} color="#222" /> },
  { label: 'Preview', w: 70, icon: <PreviewIcon /> },
];

const railItems = [
  { label: 'Stencils', h: 68, pt: 7, icon: <StencilsIcon /> },
  { label: 'Pages', h: 67, pt: 8, active: true, icon: <PagesIcon /> },
  { label: 'Outline', icon: <OutlineIcon /> },
  { label: 'Templates', icon: <TemplatesIcon /> },
  { label: 'Images', icon: <ImagesIcon /> },
  { label: 'Icons', icon: <BsSuitClubFill size={36} /> },
  { label: 'Comments', icon: <CommentsIcon /> },
];

const range = (from, to, step) => {
  const out = [];
  for (let v = from; v <= to; v += step) out.push(v);
  return out;
};

function TopRuler() {
  // x = 0 of this svg is the page's x = 347, the 0 mark is at 515.5
  const zero = 168.5;
  return (
    <RulerSvg width="1248" height="22">
      <rect x="0" y="21" width="1248" height="1" fill="#ccc" />
      {range(-13, 86, 1).map((i) => (
        <rect key={i} x={zero + i * 12.5} y={i % 8 === 0 ? 0 : 16} width="1" height={i % 8 === 0 ? 22 : 5} fill="#ccc" />
      ))}
      {range(-100, 800, 100).map((v) => (
        <text key={v} x={zero + v * 1.25 + 3} y="14">{v}</text>
      ))}
    </RulerSvg>
  );
}

function SideRuler() {
  // y = 0 of this svg is the page's y = 199, the 0 mark is at 347.5
  const zero = 148.5;
  return (
    <RulerSvg width="23" height="831">
      {range(-11, 54, 1).map((i) => (
        <rect key={i} x={i % 8 === 0 ? 0 : 17} y={zero + i * 12.5} width={i % 8 === 0 ? 23 : 5} height="1" fill="#ccc" />
      ))}
      {range(-100, 500, 100).map((v) => (
        <text key={v} transform={`translate(14 ${zero + v * 1.25 - 4}) rotate(-90)`}>{v}</text>
      ))}
    </RulerSvg>
  );
}

function CardColumn({ w, thumbMl, gap, pr }) {
  return (
    <Card $w={w}>
      <Thumb $ml={thumbMl} />
      <Meta $gap={gap} $pr={pr}>
        <span>Author's name</span>
        <span>Date added</span>
      </Meta>
      <TextBox>Description</TextBox>
      <TextBox>Tags section</TextBox>
    </Card>
  );
}

export default function App() {
  return (
    <Screen>
      <Global />
      <TabStrip>
        {tabs.map((t) => (
          <Tab key={t.title} $active={t.active}>
            <TabShape $active={t.active}>
              {t.icon}
              <TabTitle $fade={t.fade}>{t.title}</TabTitle>
              <FaTimes size={11} color="#555" />
            </TabShape>
          </Tab>
        ))}
        <NewTab />
        <WindowControls>
          <Profile>Anton</Profile>
          <WinButton>
            <svg width="12" height="12" viewBox="0 0 12 12"><rect y="6" width="12" height="1" fill="#333" /></svg>
          </WinButton>
          <WinButton>
            <svg width="12" height="12" viewBox="0 0 12 12" fill="none" stroke="#333"><rect x=".5" y="2.500" width="8" height="9" /><path d="M3 2.500v-2h8.500v8h-3" /></svg>
          </WinButton>
          <WinButton>
            <svg width="14" height="14" viewBox="0 0 14 14" stroke="#333"><path d="M1 1l12 12M13 1l-12 12" /></svg>
          </WinButton>
        </WindowControls>
      </TabStrip>

      <AddressRow>
        <NavIcon $off>
          <svg width="18" height="16" viewBox="0 0 18 16" fill="none" stroke="#333" strokeWidth="2"><path d="M17 8h-15M9 1l-7 7 7 7" /></svg>
        </NavIcon>
        <NavIcon $off>
          <svg width="18" height="16" viewBox="0 0 18 16" fill="none" stroke="#333" strokeWidth="2"><path d="M1 8h15M9 1l7 7-7 7" /></svg>
        </NavIcon>
        <NavIcon>
          <svg width="18" height="18" viewBox="0 0 18 18" fill="none" stroke="#444" strokeWidth="2"><path d="M15 5a7.500 7.500 0 1 0 1.500 5" /><path d="M16.500 1v6h-6z" fill="#444" stroke="none" /></svg>
        </NavIcon>
        <NavIcon>
          <svg width="18" height="18" viewBox="0 0 18 18" fill="none" stroke="#444" strokeWidth="1.800"><path d="M1 9l8-8 8 8M4 7v10h10v-10" /></svg>
        </NavIcon>
        <AddressBar>
          <svg width="11" height="15" viewBox="0 0 11 15" fill="#0b8043"><rect y="6" width="11" height="9" rx="1" /><path d="M2.500 6v-2.500a3 3 0 0 1 6 0v2.500" fill="none" stroke="#0b8043" strokeWidth="1.500" /></svg>
          <Secure>Secure</Secure>
          <UrlScheme>https://</UrlScheme>
          <UrlStrong>app.moqups.com</UrlStrong>
          <UrlGrey>/antonysheremet@gmail.com/ThbypdDkZx/edit/page/ae988a795</UrlGrey>
          <FaRegStar size={18} color="#444" style={{ marginLeft: 'auto' }} />
        </AddressBar>
        <Extensions>
          <Ext><svg width="20" height="22"><ellipse cx="10" cy="11" rx="7" ry="8" fill="none" stroke="#999" strokeWidth="5" /></svg></Ext>
          <Ext><svg width="20" height="20" viewBox="0 0 20 20"><circle cx="10" cy="10" r="9" fill="#e33" /><path d="M10 10V1A9 9 0 0 1 19 10z" fill="#fb0" /><path d="M10 10h9A9 9 0 0 1 10 19z" fill="#4b4" /><path d="M10 10v9A9 9 0 0 1 1 10z" fill="#29d" /><circle cx="10" cy="10" r="1.500" /></svg></Ext>
          <Ext><svg width="20" height="22" viewBox="0 0 20 22"><rect width="20" height="22" fill="#ccc" /><path d="M4 18c4-3 6-9 5-14 1 6 3 8 7 9-5 0-8 2-12 5z" fill="none" stroke="#fff" /></svg></Ext>
          <Ext><svg width="20" height="22" viewBox="0 0 20 22"><rect width="20" height="22" rx="2" fill="#555" /><circle cx="10" cy="9" r="4.500" fill="none" stroke="#fff" strokeWidth="1.500" /><rect x="8" y="14" width="4" height="3" fill="#fff" /></svg></Ext>
          <Ext><svg width="20" height="24" viewBox="0 0 20 24"><path d="M2 9l8-8 8 8" fill="none" stroke="#555" strokeWidth="1.500" /><circle cx="7" cy="12" r="3" fill="#e94" /><circle cx="13" cy="12" r="3" fill="#d33" /><circle cx="7" cy="18" r="3" fill="#4a4" /><circle cx="13" cy="18" r="3" fill="#38c" /></svg></Ext>
          <Ext><svg width="20" height="20" viewBox="0 0 20 20"><circle cx="10" cy="10" r="10" fill="#999" /><path d="M5 10a5 5 0 0 1 9-3M15 10a5 5 0 0 1-9 3" fill="none" stroke="#eee" strokeWidth="2" /></svg></Ext>
          <Ext>
            <svg width="22" height="22" viewBox="0 0 22 22"><path d="M7 0h8l7 7v8l-7 7h-8l-7-7v-8z" fill="#e0202a" /><text x="3" y="14" fontSize="8.500" fontWeight="bold" fontFamily="Liberation Sans" fill="#fff">ABP</text></svg>
            <Badge>1</Badge>
          </Ext>
          <Ext><svg width="20" height="22" viewBox="0 0 20 22"><rect width="20" height="22" rx="1" fill="#29a8ea" /><path d="M2 10h7v3h9v7h-16z" fill="#fff" /></svg></Ext>
          <Ext><FaEllipsisV size={15} color="#555" /></Ext>
        </Extensions>
      </AddressRow>

      <Bookmarks>
        {bookmarks.map((b) => (
          <Bookmark key={b.text} $w={b.w}>
            <BookmarkIcon>{b.icon}</BookmarkIcon>
            <BookmarkText $fade={b.fade}>{b.text}</BookmarkText>
          </Bookmark>
        ))}
        <span>»</span>
      </Bookmarks>

      <AppBar>
        <Logo>m</Logo>
        <ProjectInfo>
          <svg width="15" height="20" viewBox="0 0 15 20" fill="none" stroke="#e74c3c" strokeWidth="2"><rect x="1" y="8" width="13" height="11" rx="1" /><path d="M4 8v-3a3.500 3.500 0 0 1 7 0v3" /><circle cx="7.500" cy="13" r="1" fill="#e74c3c" /></svg>
          <div>
            <div>LBA: Arts</div>
            <div>Load More Button</div>
          </div>
        </ProjectInfo>
        {tools.map((t) => (
          <Tool key={t.label} $w={t.w} $ml={t.ml} $off={t.off}>
            <ToolIcon $off={t.off}>
              {t.icon}
              {t.drop && <DropMark $off={t.off} />}
            </ToolIcon>
            {t.label}
          </Tool>
        ))}
        <UpgradeNow>UPGRADE NOW</UpgradeNow>
        {rightTools.map((t) => (
          <Tool key={t.label} $w={t.w}>
            <ToolIcon>{t.icon}</ToolIcon>
            {t.label}
          </Tool>
        ))}
      </AppBar>

      <Main>
        <Rail>
          {railItems.map((r) => (
            <RailItem key={r.label} $h={r.h} $pt={r.pt} $active={r.active}>
              <RailIcon $active={r.active}>{r.icon}</RailIcon>
              {r.label}
            </RailItem>
          ))}
          <RailBottom>
            <FaQuestionCircle size={34} />
            <AvatarCircle><FaUser size={30} /></AvatarCircle>
          </RailBottom>
        </Rail>

        <Panel>
          <SearchWrap>
            <SearchBox>
              <svg width="15" height="19" viewBox="0 0 21 26" fill="none" stroke="#333" strokeWidth="3"><circle cx="13" cy="8" r="6.500" /><path d="M9 14l-6 11" /></svg>
              Search Pages
            </SearchBox>
          </SearchWrap>
          <PanelHead $h={35} $pl={10} $pb={4}>
            <FaThumbtack size={16} color="#0e6fe0" />
            PINNED
          </PanelHead>
          <PageRow $shade $h={28}>
            <Doc />
            Edit Post Page
          </PageRow>
          <PanelHead $h={33} $pl={6}>ALL PAGES</PanelHead>
          <NewPageRow>
            <NewPageIcon />
            <NewPageLabel>New Page</NewPageLabel>
            <RowActions>
              <FaFolderPlus size={20} />
              <FaTrashAlt size={20} />
              <FaCopy size={20} />
              <ActionDots><FaEllipsisV size={14} /></ActionDots>
            </RowActions>
          </NewPageRow>
          <ListGap />
          {allPages.map((name, i) => (
            <PageRow key={name} $active={i === 2} $shade={i % 2 === 0 && i !== 2}>
              {i === 2 ? <Doc line="#fff" /> : <Doc />}
              {name}
            </PageRow>
          ))}
          <PlanBox>
            Free plan: 100/300 objects
            <PlanRow>
              <Progress><ProgressFill style={{ width: `${(100 / 300) * 100}%` }} /></Progress>
              <SmallUpgrade>Upgrade</SmallUpgrade>
            </PlanRow>
          </PlanBox>
        </Panel>

        <Workspace>
          <RulerCorner />
          <TopRuler />
          <SideRuler />
          <Canvas>
            <Mock>
              <MockBar $h={62}>
                <MockTitle>LBA: Arts</MockTitle>
                <FilterInput>enter filter text</FilterInput>
                <MockButton $w={60} $h={24} $ml="15px">Filter</MockButton>
                <MockButton $w={90} $h={24} $ml="auto" $mr={23}>Sign in</MockButton>
              </MockBar>
              <MockBody>
                <Cards>
                  <CardColumn w={376} gap={46} pr={22} />
                  <CardColumn w={381} thumbMl={5} gap={44} pr={25} />
                </Cards>
                <MockButton $big $w={260} $h={52} $ml="296px">Load more</MockButton>
              </MockBody>
              <MockBar $h={63}>
                <FooterText>LBA: Arts by Anton Sheremet, course 2, group 12, antonysheremet@gmail.com, 28.05.2018</FooterText>
              </MockBar>
            </Mock>
            <VScroll>
              <VThumb />
              <Arrow $css="top: 6px; left: 6px; border-bottom: 7px solid #555; border-top: 0;" />
              <Arrow $css="bottom: 8px; left: 6px; border-top: 7px solid #555; border-bottom: 0;" />
            </VScroll>
            <HScroll>
              <HThumb />
              <Arrow $css="left: 9px; top: 5px; border-right: 7px solid #555; border-left: 0;" />
              <Arrow $css="right: 28px; top: 5px; border-left: 7px solid #555; border-right: 0;" />
            </HScroll>
            <Corner />
          </Canvas>
        </Workspace>

        <Props>
          <AlignBar>
            {alignShapes.map((d) => <AlignIcon key={d} d={d} />)}
          </AlignBar>
          <SectionHead $h={28}>DEFAULT STYLES</SectionHead>
          <Section $h={152} $line>
            <InfoCard>
              <InfoBold>You’re in Default Styles mode.</InfoBold>
              Any style you pick now will be applied
              <br />
              to all new objects you add to the page.
              <InfoLink>Clear default styles</InfoLink>
            </InfoCard>
          </Section>
          <SectionHead>TEXT</SectionHead>
          <Section $h={214} $line>
            <Row>
              <Field $w={183} $h={33}>
                <FieldText>Font family</FieldText>
                <Caret />
              </Field>
              <Field $w={100} $h={33}>
                <FieldText $size={13.500} $pl={6}>None</FieldText>
                <Caret />
              </Field>
            </Row>
            <Row>
              <Field $w={158}>
                <FieldIcon>
                  <svg width="16" height="17" viewBox="0 0 16 17" fill="#666"><path d="M6.500 1h3l4 11h-2l-1-3h-5l-1 3h-2zM6 7.500h4l-2-5z" /><rect y="15" width="16" height="2" fill="#bbb" /></svg>
                </FieldIcon>
                <Swatch>?</Swatch>
              </Field>
              <Field $w={126}>
                <FieldText>
                  <TextSizeIcon />
                  <FieldUnit>PX</FieldUnit>
                </FieldText>
                <Caret />
              </Field>
            </Row>
            <Seg>
              <SegCell>B</SegCell>
              <SegCell $font={'italic bold 14px "Liberation Serif", serif'}>I</SegCell>
              <SegCell $under>U</SegCell>
              <SegCell>
                <VAlign d="M2 1h10v2h-10zM0 7h14v1.500h-14zM5 11h4v3h-4z" />
              </SegCell>
            </Seg>
            <Seg>
              {['left', 'center', 'right', 'full'].map((m) => <SegCell key={m}><TextAlign mode={m} /></SegCell>)}
            </Seg>
            <Seg>
              <SegCell><VAlign d="M1 0h12v1.500h-12zM7 3l3 3h-2v8h-2v-8h-2z" /></SegCell>
              <SegCell><VAlign d="M0 7h14v1.300h-14zM7 5l-2-3h1.500v-2h1.500v2h1.500zM7 10l2 3h-1.500v2h-1.500v-2h-1.500z" /></SegCell>
              <SegCell><VAlign d="M1 13.500h12v1.500h-12zM7 11l-3-3h2v-8h2v8h2z" /></SegCell>
              <SegCell><FaCog size={15} /></SegCell>
            </Seg>
          </Section>
          <SectionHead>FILLS &amp; STROKES</SectionHead>
          <Section $h={143} $pt={18} $line>
            <Field $w={292} $h={30}>
              <FieldIcon><FillIcon /></FieldIcon>
              <Swatch $bg="#fad7d5" $line="#e5c0be" />
              <Swatch $bg="#ecb78b" $line="#c49a74" />
            </Field>
            <Field $w={292} $h={30} $mt={1}>
              <FieldIcon><PenIcon /></FieldIcon>
              <Swatch $bg="#f13d35" $line="#d53a32" />
            </Field>
            <Row $mt={1}>
              <Field $w={141} $h={30}>
                <FieldText $pl={5}><LineWeight /><FieldUnit>PT</FieldUnit></FieldText>
                <Caret />
              </Field>
              <Field $w={142} $h={30}>
                <FieldText $pl={4}><StrokeStyle />Solid</FieldText>
                <Caret />
              </Field>
            </Row>
          </Section>
          <SectionHead $muted>
            ROUNDED CORNERS
            <span>[+]</span>
          </SectionHead>
          <SectionHead $h={29}>CONNECTORS</SectionHead>
          <Section $h={143} $gap={8} $line>
            <Field $w={292}>
              <FieldIcon><PenIcon /></FieldIcon>
              <Swatch>?</Swatch>
            </Field>
            <Row>
              <Field $w={141} $h={30}>
                <FieldText $pl={5}><LineWeight /><FieldUnit>PT</FieldUnit></FieldText>
                <Caret />
              </Field>
              <Field $w={142} $h={30}>
                <FieldText $pl={4}><StrokeStyle />Solid</FieldText>
                <Caret />
              </Field>
            </Row>
            <Row $mt={1}>
              {['Style', 'Start', 'End'].map((s) => (
                <Field key={s} $w={91} $h={30}>
                  <FieldText>{s}</FieldText>
                  <Caret />
                </Field>
              ))}
            </Row>
          </Section>
        </Props>
      </Main>

      <Taskbar>
        <TaskItem $w={60}><FaWindows size={22} color="#fff" /></TaskItem>
        <TaskItem $w={63} $pr={3}>
          <svg width="22" height="22" viewBox="0 0 22 22" fill="none" stroke="#fff" strokeWidth="1.500"><circle cx="13.500" cy="8.500" r="7" /><path d="M8.500 13.500l-7.500 8" /></svg>
        </TaskItem>
        <TaskItem $open><FloppyIcon /></TaskItem>
        <TaskItem $open $active><ChromeIcon /></TaskItem>
        <TaskItem><VsIcon /></TaskItem>
        <TaskItem><IdeaIcon /></TaskItem>
        <TaskItem><FaSkype size={30} color="#00aff0" /></TaskItem>
        <TaskItem $open><HangoutsIcon /></TaskItem>
        <TaskItem $open><KrakenIcon /></TaskItem>
        <TaskItem $open><PaletteIcon /></TaskItem>
        <Tray>
          <svg width="16" height="9" viewBox="0 0 16 9" fill="none" stroke="#ddd" strokeWidth="1.200"><path d="M1 8l7-7 7 7" /></svg>
          <Battery />
          <Wifi />
          <Speaker />
          <Lang>ENG</Lang>
          <Clock>
            <div>4:26 AM</div>
            <div>5/29/2018</div>
          </Clock>
        </Tray>
      </Taskbar>
    </Screen>
  );
}
